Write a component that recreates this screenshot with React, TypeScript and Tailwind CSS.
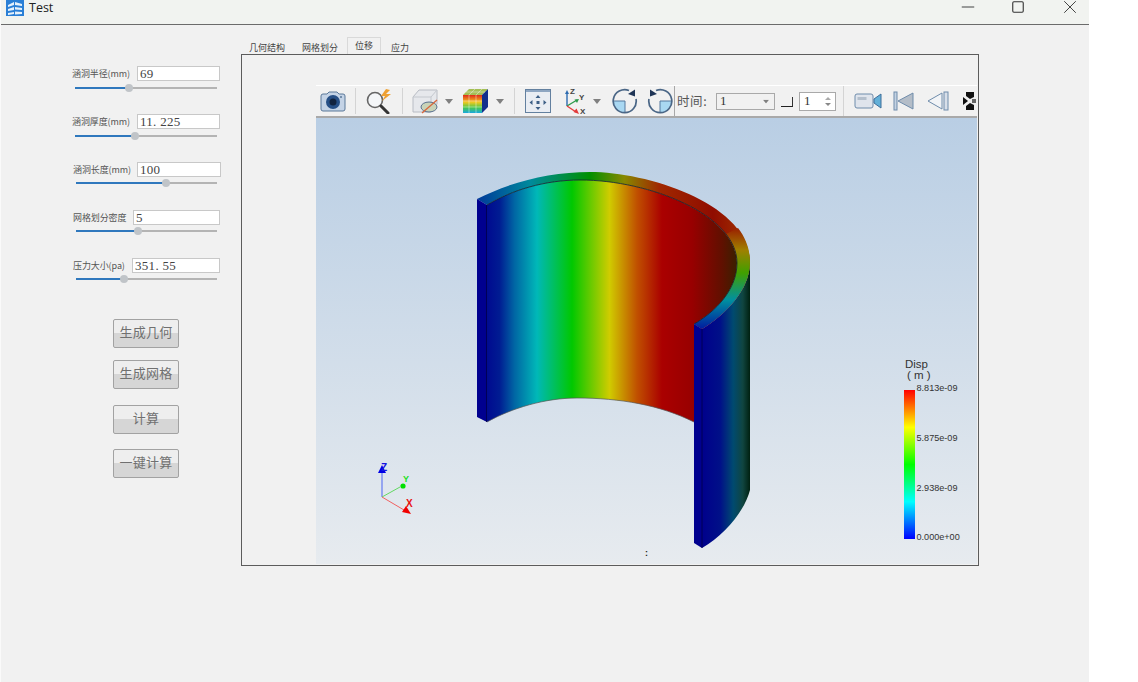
import { Minus, Square, X } from "lucide-react";

const cjk = "font-['Noto_Sans_CJK_SC',sans-serif]";

const params = [
  { label: "涵洞半径(mm)", value: "69", rowClass: "pl-[71px]", inputClass: "w-[83px] ml-[4px]", sliderClass: "ml-[74px] w-[142px] mt-[6px]", pct: 38 },
  { label: "涵洞厚度(mm)", value: "11. 225", rowClass: "pl-[71px]", inputClass: "w-[83px] ml-[4px]", sliderClass: "ml-[74px] w-[142px] mt-[6px]", pct: 42 },
  { label: "涵洞长度(mm)", value: "100", rowClass: "pl-[72px]", inputClass: "w-[84px] ml-[3px]", sliderClass: "ml-[75px] w-[141px] mt-[5px]", pct: 64 },
  { label: "网格划分密度", value: "5", rowClass: "pl-[72px]", inputClass: "w-[87px] -ml-[1px]", sliderClass: "ml-[75px] w-[141px] mt-[5px]", pct: 44 },
  { label: "压力大小(pa)", value: "351. 55", rowClass: "pl-[72px]", inputClass: "w-[88px] -ml-[2px]", sliderClass: "ml-[75px] w-[141px] mt-[5px]", pct: 34 },
];

const actions = [
  { label: "生成几何", className: "mt-0" },
  { label: "生成网格", className: "mt-[12px]" },
  { label: "计算", className: "mt-[16px]" },
  { label: "一键计算", className: "mt-[15px]" },
];

const tabs = [
  { label: "几何结构", className: "w-[53px] pl-[8px]" },
  { label: "网格划分", className: "w-[53px] pl-[8px]" },
  { label: "位移", className: "w-[34px] pl-[7px] h-[17px] bg-[#f1f1f1] border border-b-0 border-[#d9d9d9]" },
  { label: "应力", className: "w-[36px] pl-[10px]" },
];

function ParamRow({ p }: { p: (typeof params)[number] }) {
  return (
    <div className="h-[48px]">
      <div className={`flex items-center ${p.rowClass}`}>
        <span className={`w-[61px] shrink-0 whitespace-nowrap text-[9px] tracking-[-0.1px] text-[#555] ${cjk}`}>{p.label}</span>
        <div
          className={`flex h-[15px] items-center border border-[#c8c8c8] bg-white pl-[2px] font-['Liberation_Serif',serif] text-[13px] tracking-[0.3px] text-[#444] ${p.inputClass}`}
        >
          {p.value}
        </div>
      </div>
      <div className={`relative h-[2px] bg-[#b4b4b4] ${p.sliderClass}`}>
        <div className="h-[2px] bg-[#2f78bd]" style={{ width: `${p.pct}%` }} />
        <div
          className="absolute top-[-3px] h-[8px] w-[8px] -translate-x-1/2 rounded-full bg-[#c0c4c8]"
          style={{ left: `${p.pct}%` }}
        />
      </div>
    </div>
  );
}

function Sep({ className }: { className: string }) {
  return <div className={`h-[26px] w-[1px] bg-[#d4d4d4] ${className}`} />;
}

function Caret({ className }: { className: string }) {
  return (
    <svg width="8" height="5" viewBox="0 0 8 5" className={className}>
      <path d="M0 0H8L4 5Z" fill="#808080" />
    </svg>
  );
}

function CameraIcon() {
  return (
    <svg width="28" height="24" viewBox="0 0 28 24" className="ml-[3px]">
      <path d="M2 7Q2 5 4 5H8L10 3H18L20 5H24Q26 5 26 7V20Q26 22 24 22H4Q2 22 2 20Z" fill="#c4d3e6" stroke="#5a7899" />
      <circle cx="14" cy="13" r="7" fill="#264f86" />
      <circle cx="14" cy="13" r="3.5" fill="#11233f" />
      <circle cx="22" cy="8" r="1" fill="#5a7899" />
    </svg>
  );
}

function SearchIcon() {
  return (
    <svg width="28" height="26" viewBox="0 0 28 26" className="ml-[9px]">
      <circle cx="10" cy="12" r="7.5" fill="#f4f6f8" stroke="#666" strokeWidth="1.6" />
      <path d="M16 18L23 25" stroke="#333" strokeWidth="3" strokeLinecap="round" />
      <path d="M21 1L16 8H20L17 13L26 6H21L25 2Z" fill="#eea032" />
    </svg>
  );
}

function BoxIcon() {
  return (
    <svg width="28" height="26" viewBox="0 0 28 26" className="ml-[9px]">
      <path d="M1 9L7 2H25V16L19 24H1Z" fill="#e6e8ec" stroke="#b8bcc4" />
      <path d="M1 9H19V24M19 9L25 2" fill="none" stroke="#c4c8ce" />
      <ellipse cx="17" cy="19" rx="8" ry="5" fill="#c9d3b8" stroke="#58708e" />
      <path d="M10 25L25 12" stroke="#d8663a" strokeWidth="1.3" />
    </svg>
  );
}

function CubeIcon() {
  return (
    <svg width="28" height="26" viewBox="0 0 28 26" className="ml-[9px]">
      <defs>
        <linearGradient id="cubeFace" x1="0" y1="0" x2="0" y2="1">
          <stop offset="0" stopColor="#e02a1a" />
          <stop offset="0.4" stopColor="#f2c81e" />
          <stop offset="0.7" stopColor="#4ac84a" />
          <stop offset="1" stopColor="#18a8e0" />
        </linearGradient>
      </defs>
      <path d="M1 7H20V25H1Z" fill="url(#cubeFace)" />
      <path d="M1 7L7 1H26L20 7Z" fill="#a4bf55" />
      <path d="M20 7L26 1V19L20 25Z" fill="#12308c" />
      <path d="M7 7V25M14 7V25M1 13H20M1 19H20M7 7L13 1M14 7L20 1M4 4H23" stroke="#fff" strokeOpacity="0.5" strokeWidth="0.8" fill="none" />
    </svg>
  );
}

function MoveIcon() {
  return (
    <svg width="28" height="26" viewBox="0 0 28 26" className="ml-[9px]">
      <rect x="1.5" y="1.5" width="25" height="23" fill="#e9edf3" stroke="#63809f" />
      <path d="M2 2H26V4H2Z" fill="#8ea6c2" />
      <path d="M14 7L11.5 10H16.5ZM14 22L11.5 19H16.5ZM5.5 14.5L8.5 12V17ZM22.5 14.5L19.5 12V17Z" fill="#3d5f86" />
      <rect x="12.5" y="13" width="3" height="3" fill="#3d5f86" />
    </svg>
  );
}

function AxesIcon() {
  return (
    <svg width="26" height="30" viewBox="0 0 26 30" className="ml-[10px]">
      <path d="M5 20V7" stroke="#2d6bb0" strokeWidth="1.4" />
      <path d="M5 4L3 8H7Z" fill="#2d6bb0" />
      <path d="M5 20L15 14" stroke="#2c9a4a" strokeWidth="1.4" />
      <path d="M17 13L12.5 13.5L15 17Z" fill="#2c9a4a" />
      <path d="M5 20L14 26" stroke="#e23b3b" strokeWidth="1.4" />
      <path d="M17 28L11.5 26L14.5 22.5Z" fill="#e23b3b" />
      <text x="8" y="8" className="font-['Liberation_Sans',sans-serif] text-[8px] font-bold" fill="#444">Z</text>
      <text x="17" y="14" className="font-['Liberation_Sans',sans-serif] text-[8px] font-bold" fill="#444">Y</text>
      <text x="18" y="28" className="font-['Liberation_Sans',sans-serif] text-[8px] font-bold" fill="#444">X</text>
    </svg>
  );
}

function RotateIcon({ flip, className }: { flip?: boolean; className: string }) {
  return (
    <svg width="28" height="26" viewBox="0 0 28 26" className={className}>
      <g transform={flip ? "translate(28 0) scale(-1 1)" : undefined}>
        <path d="M14 13V24.5A11.5 11.5 0 0 1 2.5 13Z" fill="#a9d8f2" />
        <path d="M14 13H2.5M14 13V24.5" stroke="#55799e" strokeWidth="1" />
        <path d="M18 2.5A11.5 11.5 0 1 0 25 11" fill="none" stroke="#4a6686" strokeWidth="1.7" />
        <path d="M24 1.5V8.5L17 6Z" fill="#1f3556" />
      </g>
    </svg>
  );
}

function VideoIcon() {
  return (
    <svg width="28" height="20" viewBox="0 0 28 20" className="ml-[3px]">
      <rect x="1" y="3" width="18" height="14" rx="2" fill="#dfe4ec" stroke="#6f8cab" />
      <rect x="3.5" y="6" width="9" height="3" fill="#b4bfcc" />
      <path d="M20 8L27 3V17L20 12Z" fill="#63b0d8" stroke="#3f6e9a" />
    </svg>
  );
}

function SkipIcon() {
  return (
    <svg width="21" height="20" viewBox="0 0 21 20" className="ml-[11px]">
      <rect x="1" y="1" width="3" height="18" fill="#c4d2e2" stroke="#6f8cab" />
      <path d="M20 2V18L5 10Z" fill="#b4bdc8" stroke="#6f8cab" />
    </svg>
  );
}

function BackIcon() {
  return (
    <svg width="22" height="20" viewBox="0 0 22 20" className="ml-[13px]">
      <path d="M15 2V18L1 10Z" fill="#f2f4f7" stroke="#6f8cab" />
      <rect x="17" y="1" width="4" height="18" fill="#d8dfe9" stroke="#6f8cab" />
    </svg>
  );
}

function ClippedIcon() {
  return (
    <svg width="13" height="18" viewBox="0 0 13 18" className="ml-[14px] shrink-0">
      <path d="M0 5L5 9L0 13Z" fill="#111" />
      <path d="M3 0H11V5L7 7L3 4ZM3 18H11V13L7 11L3 14Z" fill="#111" />
      <path d="M9 7H13V11H9Z" fill="#666" />
    </svg>
  );
}

function Scene() {
  return (
    <svg viewBox="316 118 661 446" className="absolute inset-0 h-full w-full">
      <defs>
        <linearGradient id="innerWall" gradientUnits="userSpaceOnUse" x1="487" y1="0" x2="737" y2="0">
          <stop offset="0" stopColor="#000a90" />
          <stop offset="0.05" stopColor="#001c92" />
          <stop offset="0.11" stopColor="#0066a4" />
          <stop offset="0.2" stopColor="#00b8b8" />
          <stop offset="0.34" stopColor="#00c800" />
          <stop offset="0.49" stopColor="#d0cc00" />
          <stop offset="0.6" stopColor="#c05000" />
          <stop offset="0.7" stopColor="#aa0000" />
          <stop offset="0.82" stopColor="#980000" />
          <stop offset="0.94" stopColor="#601000" />
          <stop offset="1" stopColor="#3a2000" />
        </linearGradient>
        <linearGradient id="rimTop" gradientUnits="userSpaceOnUse" x1="477" y1="0" x2="745" y2="0">
          <stop offset="0" stopColor="#003a9a" />
          <stop offset="0.2" stopColor="#008a9c" />
          <stop offset="0.42" stopColor="#009000" />
          <stop offset="0.55" stopColor="#888800" />
          <stop offset="0.68" stopColor="#a02800" />
          <stop offset="0.88" stopColor="#900c00" />
          <stop offset="1" stopColor="#a03000" />
        </linearGradient>
        <linearGradient id="rimSide" gradientUnits="userSpaceOnUse" x1="0" y1="228" x2="0" y2="328">
          <stop offset="0" stopColor="#9a2000" />
          <stop offset="0.22" stopColor="#a08000" />
          <stop offset="0.45" stopColor="#40a000" />
          <stop offset="0.72" stopColor="#0090a0" />
          <stop offset="1" stopColor="#0020a0" />
        </linearGradient>
        <linearGradient id="outerWall" gradientUnits="userSpaceOnUse" x1="702" y1="0" x2="750" y2="0">
          <stop offset="0" stopColor="#00008c" />
          <stop offset="0.38" stopColor="#001088" />
          <stop offset="0.65" stopColor="#004a70" />
          <stop offset="0.85" stopColor="#104540" />
          <stop offset="1" stopColor="#002010" />
        </linearGradient>
        <linearGradient id="legendBar" x1="0" y1="1" x2="0" y2="0">
          <stop offset="0" stopColor="#0000ff" />
          <stop offset="0.25" stopColor="#00ffff" />
          <stop offset="0.5" stopColor="#00ff00" />
          <stop offset="0.75" stopColor="#ffff00" />
          <stop offset="1" stopColor="#ff0000" />
        </linearGradient>
      </defs>

      {/* inner wall */}
      <path
        d="M487 205C512 190 545 180 580 180C650 180 737 215 737 263C737 290 715 312 694 324V422C660 405 620 398 577 398C545 398 512 408 487 422Z"
        fill="url(#innerWall)"
      />
      {/* outer wall */}
      <path d="M702 329C725 315 750 290 750 262V490C745 510 725 535 702 548Z" fill="url(#outerWall)" />
      {/* top rim */}
      <path
        d="M477 199C510 182 550 172 590 172C650 172 750 205 750 262C750 290 725 315 702 329L694 324C715 312 737 290 737 263C737 215 650 180 580 180C545 180 512 190 487 205Z"
        fill="url(#rimTop)"
      />
      <path
        d="M738 228C746 238 750 250 750 262C750 290 725 315 702 329L694 324C715 312 737 290 737 263C737 252 733 243 726 234Z"
        fill="url(#rimSide)"
      />
      <path
        d="M694 324C715 312 737 290 737 263C737 215 650 180 580 180C545 180 512 190 487 205"
        fill="none"
        stroke="#12202a"
        strokeWidth="0.8"
      />
      <path d="M487 422C512 408 545 398 577 398C620 398 660 405 694 422" fill="none" stroke="#555" strokeWidth="0.7" />
      {/* cut faces */}
      <path d="M477 199L487 205V422L477 417Z" fill="#00008f" />
      <path d="M694 324L702 329V548L694 543Z" fill="#00008f" />
      <path d="M486.5 205V422M702 329V548" stroke="#000048" strokeWidth="0.8" />

      {/* orientation axes */}
      <path d="M382 497V472" stroke="#7d8ff0" strokeWidth="1.5" />
      <path d="M382 465L378 473H386Z" fill="#0000e6" />
      <path d="M382 497L400 487" stroke="#62d962" strokeWidth="1" />
      <circle cx="403" cy="486" r="2.6" fill="#00e000" />
      <path d="M382 497L404 510" stroke="#f06060" strokeWidth="1" />
      <path d="M411 514L402 512L406 506Z" fill="#f00000" />
      <text x="381" y="471" fontSize="10" fontWeight="700" fill="#1515e0" className="font-['Liberation_Sans',sans-serif]">Z</text>
      <text x="403" y="482" fontSize="9" fontWeight="700" fill="#20e020" className="font-['Liberation_Sans',sans-serif]">Y</text>
      <text x="406" y="507" fontSize="10" fontWeight="700" fill="#e81010" className="font-['Liberation_Sans',sans-serif]">X</text>

      {/* legend */}
      <rect x="904" y="390" width="11" height="149" fill="url(#legendBar)" />
      <g fill="#333" className="font-['Liberation_Sans',sans-serif]">
        <text x="905" y="368" fontSize="11.5">Disp</text>
        <text x="907" y="379" fontSize="11.5">( m )</text>
        <text x="916.5" y="391" fontSize="9.1">8.813e-09</text>
        <text x="916.5" y="441" fontSize="9.1">5.875e-09</text>
        <text x="916.5" y="491" fontSize="9.1">2.938e-09</text>
        <text x="916.5" y="540" fontSize="9.1">0.000e+00</text>
      </g>
      <text x="645" y="556" fontSize="9" fontWeight="700" fill="#222" className="font-['Liberation_Sans',sans-serif]">:</text>
    </svg>
  );
}

function Toolbar() {
  return (
    <div className="flex h-[33px] items-center overflow-hidden border-t border-b-2 border-t-white border-b-[#a9a9a9] bg-[#f1f1f1]">
      <CameraIcon />
      <Sep className="ml-[8px]" />
      <SearchIcon />
      <Sep className="ml-[9px]" />
      <BoxIcon />
      <Caret className="ml-[5px]" />
      <CubeIcon />
      <Caret className="ml-[6px]" />
      <Sep className="ml-[10px]" />
      <MoveIcon />
      <AxesIcon />
      <Caret className="ml-[5px]" />
      <RotateIcon className="ml-[10px]" />
      <RotateIcon flip className="ml-[7px]" />
      <div className="h-full w-[1px] bg-[#a8a8a8]" />
      <span className={`ml-[2px] w-[32px] whitespace-nowrap text-[12.5px] tracking-[0.6px] text-[#555] ${cjk}`}>时间:</span>
      <div className="ml-[7px] flex h-[17px] w-[59px] items-center justify-between border border-[#a9a9a9] bg-[#f1f1f1] pl-[3px] pr-[4px] font-['Liberation_Serif',serif] text-[13px] text-[#333]">
        1
        <Caret className="scale-75" />
      </div>
      <div className="ml-[6px] mt-[2px] h-[10px] w-[12px] border-r border-b border-r-[#333] border-b-[#222]" />
      <div className="ml-[6px] flex h-[19px] w-[37px] items-center justify-between border border-[#a9a9a9] bg-white pl-[4px] pr-[4px] font-['Liberation_Serif',serif] text-[13px] text-[#333]">
        1
        <span className="flex flex-col gap-[3px]">
          <span className="h-0 w-0 border-x-[3px] border-b-[3px] border-x-transparent border-b-[#aaa]" />
          <span className="h-0 w-0 border-x-[3px] border-t-[3px] border-x-transparent border-t-[#888]" />
        </span>
      </div>
      <Sep className="ml-[7px] !h-full bg-[#c4c4c4]" />
      <div className="ml-[7px] flex h-full min-w-0 flex-1 items-center overflow-hidden">
        <VideoIcon />
        <SkipIcon />
        <BackIcon />
        <ClippedIcon />
      </div>
    </div>
  );
}

export default function App() {
  return (
    <div className="h-[682px] w-[1138px] overflow-hidden bg-white">
      <div className="h-full w-[1089px] border-l border-l-[#fafafa] bg-[#f1f1f1]">
        <header className="flex h-[25px] items-start border-b border-b-[#6b6b6b] bg-[#f1f3f0]">
          <svg width="18" height="16" viewBox="0 0 18 16" className="ml-[5px] shrink-0">
            <rect width="18" height="16" fill="#2a7fd6" />
            <path d="M2 5L8 2V5L2 7ZM2 9L8 7V10L2 11ZM2 13L8 12V14L2 15ZM9 2L16 4V6L9 5ZM9 7L16 8V10L9 9.5ZM9 11.5L16 12V14L9 14.5Z" fill="#e6f1fb" />
          </svg>
          <span className="ml-[5px] font-['Open_Sans',sans-serif] text-[12.5px] leading-[16px] text-[#222]">Test</span>
          <div className="ml-auto flex items-start">
            <Minus size={20} strokeWidth={1.1} className="mr-[33px] -mt-[3px] text-[#333]" />
            <Square size={14} strokeWidth={1.9} className="text-[#333]" />
            <X size={22} strokeWidth={1} className="ml-[34px] mr-[8px] -mt-[4px] text-[#333]" />
          </div>
        </header>

        <div className="flex">
          <aside className="w-[240px] shrink-0 pt-[41px]">
            {params.map((p) => (
              <ParamRow key={p.label} p={p} />
            ))}
            <div className="mt-[13px] flex flex-col pl-[112px]">
              {actions.map((a) => (
                <button
                  key={a.label}
                  className={`h-[29px] w-[66px] rounded-[2px] border border-[#a2a2a2] bg-[linear-gradient(#eeeeee_0%,#eeeeee_48%,#d6d6d6_50%,#d6d6d6_100%)] pb-[3px] text-[13px] tracking-[0.3px] text-[#707070] ${cjk} ${a.className}`}
                >
                  {a.label}
                </button>
              ))}
            </div>
          </aside>

          <main className="w-[738px] pt-[13px]">
            <div className={`flex h-[16px] items-end text-[9px] text-[#444] ${cjk}`}>
              {tabs.map((t) => (
                <div key={t.label} className={`flex items-center whitespace-nowrap ${t.className}`}>
                  {t.label}
                </div>
              ))}
            </div>
            <div className="h-[512px] border border-[#5c5c5c] pl-[74px] pr-[1px] pt-[30px]">
              <Toolbar />
              <div className="relative h-[446px] bg-[linear-gradient(#b9cee4,#e7ebef)]">
                <Scene />
              </div>
            </div>
          </main>
        </div>
      </div>
    </div>
  );
}
